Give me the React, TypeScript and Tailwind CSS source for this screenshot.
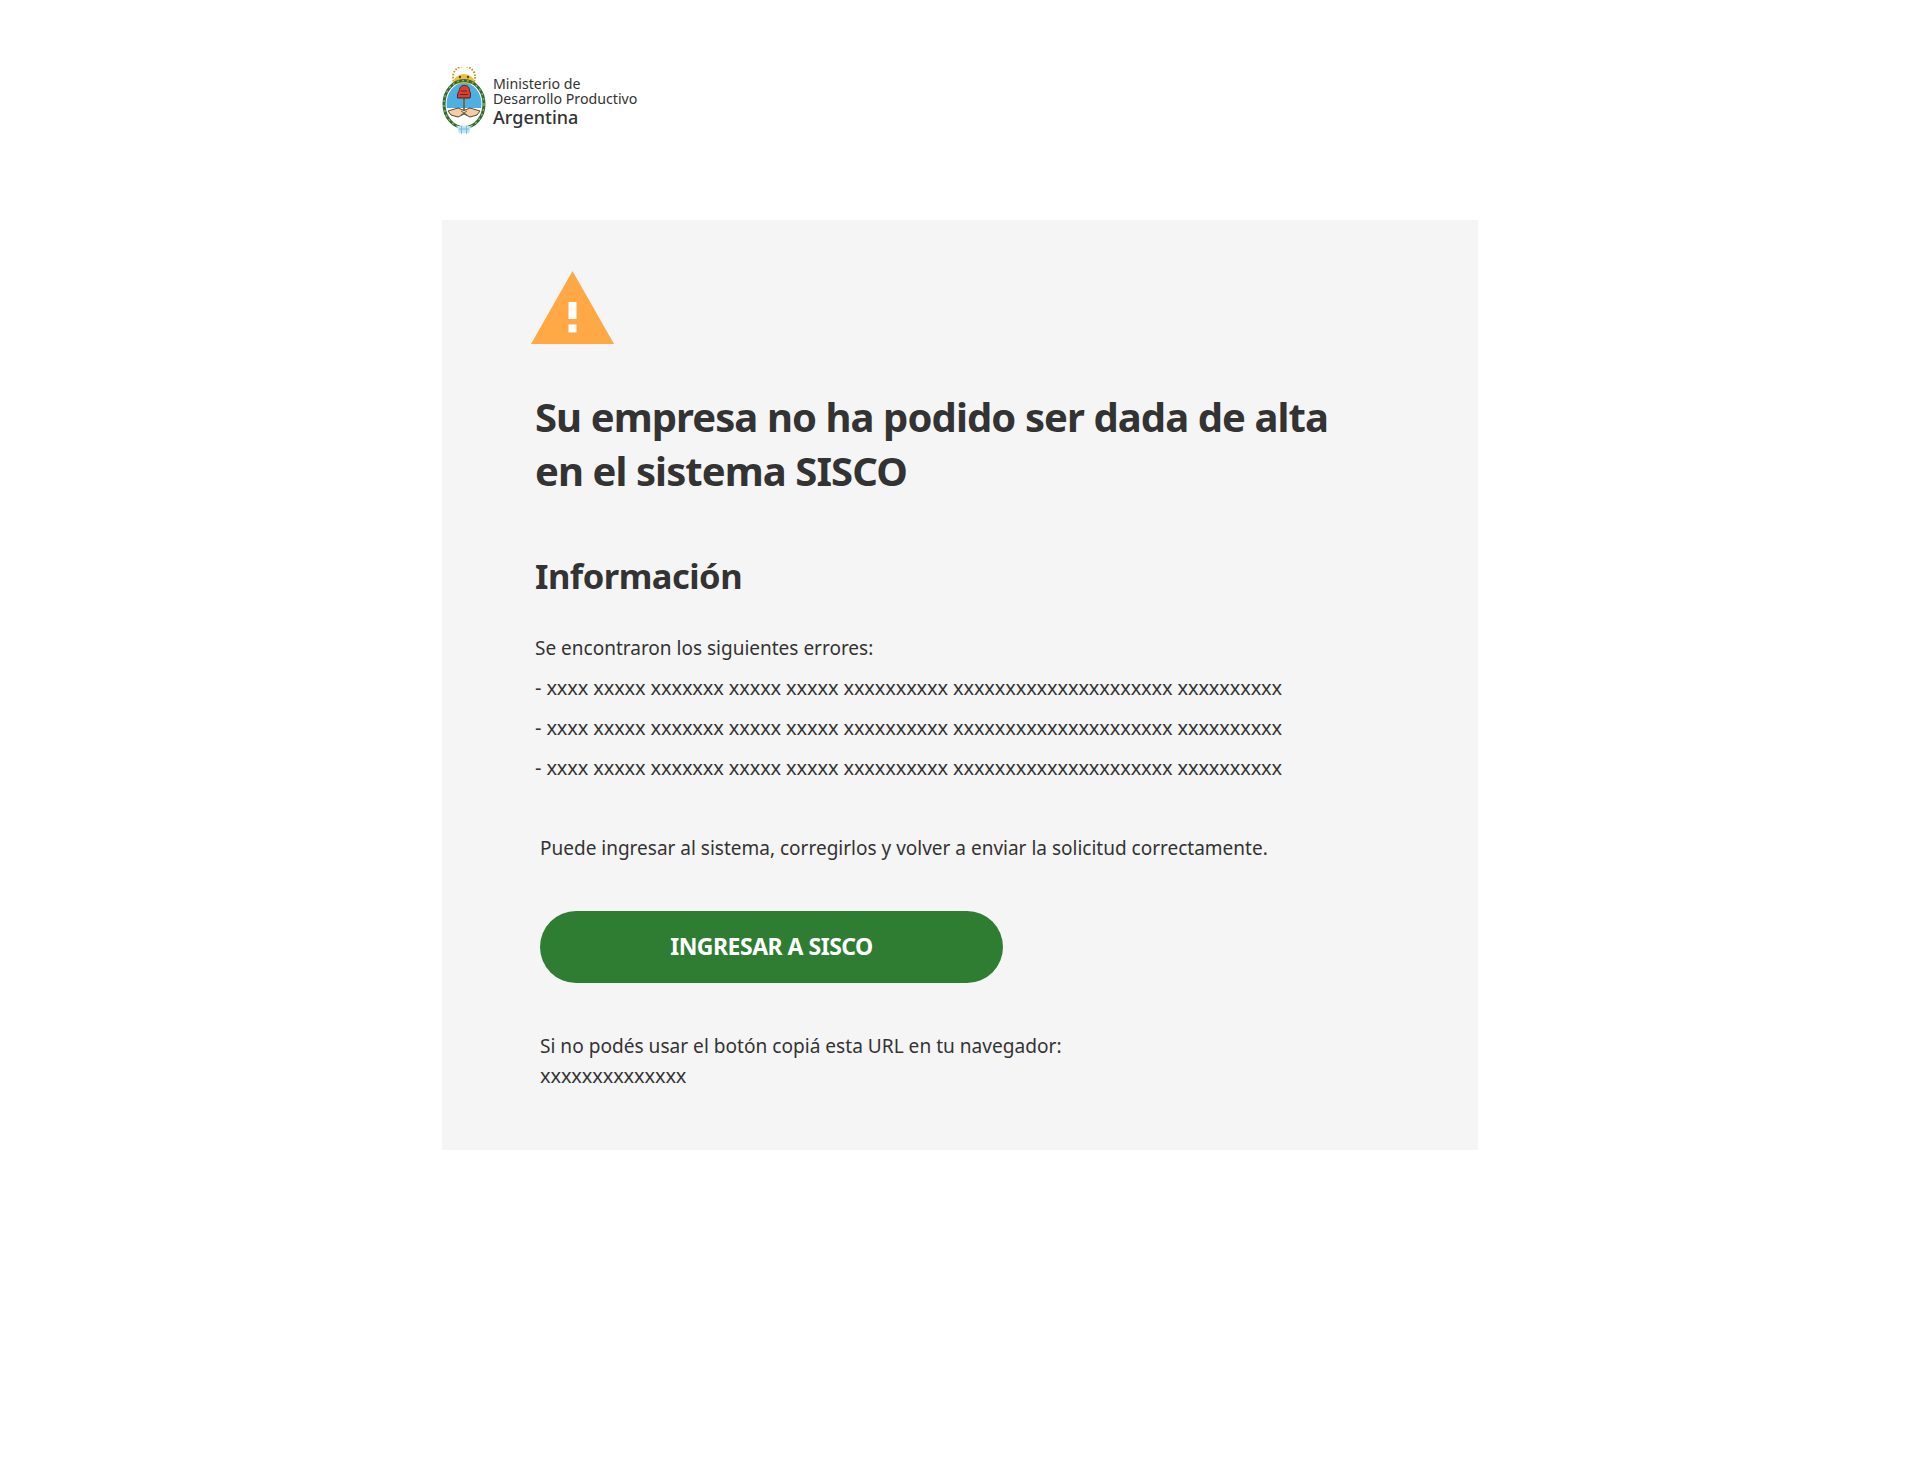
import React from "react";

const errorLine = "- xxxx xxxxx xxxxxxx xxxxx xxxxx xxxxxxxxxx xxxxxxxxxxxxxxxxxxxxx xxxxxxxxxx";

const Escudo = () => (
  <svg width="44" height="68" viewBox="0 0 44 68" className="shrink-0">
    {/* sol */}
    <circle cx="22" cy="10" r="11" fill="none" stroke="#c79a2a" strokeWidth="2" strokeDasharray="1.6 1.4" />
    <path d="M11 17 A11 10 0 0 1 33 17 Z" fill="#f2bd3c" />
    <circle cx="18" cy="10" r="1.2" fill="#5e4310" />
    <circle cx="26" cy="10" r="1.2" fill="#5e4310" />
    <path d="M18.5 13.5 H25.5" stroke="#5e4310" strokeWidth="1" />
    {/* laureles */}
    <ellipse cx="22" cy="37" rx="20" ry="23.5" fill="none" stroke="#2d6b3c" strokeWidth="3" />
    <ellipse cx="22" cy="37" rx="20" ry="23.5" fill="none" stroke="#a8b24a" strokeWidth="1.4" strokeDasharray="2 3" />
    <clipPath id="oval">
      <ellipse cx="22" cy="37" rx="17.5" ry="21" />
    </clipPath>
    <g clipPath="url(#oval)">
      <rect x="0" y="15" width="44" height="26" fill="#4db0e2" />
      <rect x="0" y="41" width="44" height="18" fill="#ffffff" />
    </g>
    {/* pica y gorro */}
    <rect x="21.2" y="30" width="1.6" height="14" fill="#7a5a34" />
    <path d="M15.5 31 C15 26 17 25 17.5 22.5 C18 19 21 18 23.5 18.5 C27 19 27.5 22 27.5 24 C29 26 28.5 29 28 31 Z" fill="#d8402f" stroke="#5b1a12" strokeWidth="1" />
    <path d="M19 24 H25 M18 27.5 H26" stroke="#5b1a12" strokeWidth="0.8" />
    {/* manos */}
    <path d="M6 44 L16 41 L22 43.5 L28 41 L38 44 L35 48 L28 50 L22 47 L16 50 L9 48 Z" fill="#f3cda6" stroke="#4f341c" strokeWidth="0.9" />
    <path d="M19 44 L25 48 M25 44 L19 48" stroke="#4f341c" strokeWidth="0.7" />
    {/* cinta */}
    <path d="M15 59 H29 L27 66 H17 Z" fill="#bfe2f4" />
    <path d="M17 62 H27 M19.5 59 V67 M24.5 59 V67" stroke="#6fb8dc" strokeWidth="0.9" />
  </svg>
);

export default function App() {
  return (
    <div className="min-h-[1469px] bg-white font-['Noto_Sans',sans-serif] text-[#333333]">
      <div className="mx-auto w-[1036px] pt-[67px]">
        {/* logo */}
        <div className="flex h-[67px] items-center gap-[7px] mb-[86px]">
          <Escudo />
          <div className="flex flex-col pt-[3px]">
            <span className="text-[14.2px] leading-[15px]">Ministerio de</span>
            <span className="text-[14.2px] leading-[15px]">Desarrollo Productivo</span>
            <span className="text-[18px] leading-[23px] font-medium">Argentina</span>
          </div>
        </div>

        {/* card */}
        <div className="h-[930px] bg-[#f5f5f5] pt-[51px] pl-[89px]">
          <svg width="83" height="73" viewBox="0 0 83 73" className="block">
            <path d="M41.5 0 L83 73 H0 Z" fill="#ffa845" />
            <rect x="37.5" y="31" width="8" height="17" fill="#fff" />
            <rect x="37.5" y="53.5" width="8" height="8" fill="#fff" />
          </svg>

          <h1 className="mt-[46px] ml-[4px] w-[820px] text-[40px] leading-[54px] font-bold tracking-[-0.92px]">
            Su empresa no ha podido ser dada de alta en el sistema SISCO
          </h1>

          <h2 className="mt-[53px] ml-[4px] text-[34.5px] leading-[50px] font-bold tracking-[-0.5px]">Información</h2>

          <div className="mt-[27px] ml-[4px] text-[20px] leading-[40px] tracking-[-0.13px]">
            <p className="text-[19px] tracking-normal">Se encontraron los siguientes errores:</p>
            <p>{errorLine}</p>
            <p>{errorLine}</p>
            <p>{errorLine}</p>
          </div>

          <p className="mt-[40px] ml-[9px] text-[19px] leading-[40px]">
            Puede ingresar al sistema, corregirlos y volver a enviar la solicitud correctamente.
          </p>

          <div className="mt-[43px] ml-[9px] flex h-[72px] w-[463px] items-center justify-center rounded-[36px] bg-[#2e7d33] pb-[2px] text-[23px] font-bold tracking-[-0.5px] text-white">
            INGRESAR A SISCO
          </div>

          <div className="mt-[48px] ml-[9px] leading-[30px]">
            <p className="text-[19.1px]">Si no podés usar el botón copiá esta URL en tu navegador:</p>
            <p className="text-[20px] tracking-[-0.13px]">xxxxxxxxxxxxxx</p>
          </div>
        </div>
      </div>
    </div>
  );
}
